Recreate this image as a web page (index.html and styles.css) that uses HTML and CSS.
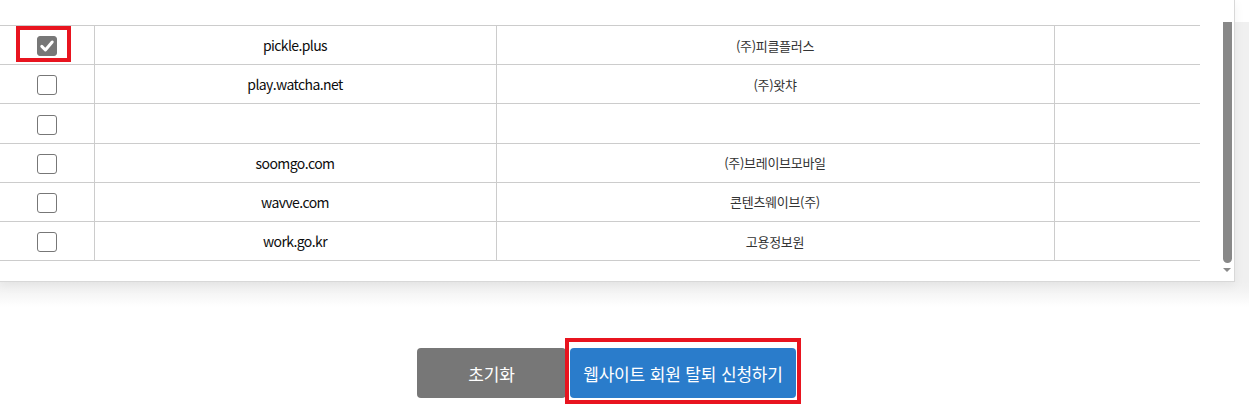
FILE: index.html
```html
<!DOCTYPE html>
<html lang="ko">
<head>
<meta charset="utf-8">
<title>웹사이트 회원 탈퇴</title>
<link rel="stylesheet" href="styles.css">
</head>
<body>
<div class="shade">
  <div class="panel">
    <div class="table-area">
      <table class="sites">
        <colgroup>
          <col class="c-check"><col class="c-domain"><col class="c-company"><col class="c-extra">
        </colgroup>
        <tbody>
          <tr>
            <td class="check-cell"><span class="checkbox checked"><svg viewBox="0 0 20 20" width="20" height="20"><path d="M4.8 10.4 L8.4 14 L15.2 6" fill="none" stroke="#fff" stroke-width="3" stroke-linecap="round" stroke-linejoin="round"/></svg></span><span class="mark mark-check"></span></td>
            <td>pickle.plus</td><td class="ko">(주)피클플러스</td><td></td>
          </tr>
          <tr>
            <td class="check-cell"><span class="checkbox"></span></td>
            <td>play.watcha.net</td><td class="ko">(주)왓챠</td><td></td>
          </tr>
          <tr>
            <td class="check-cell"><span class="checkbox"></span></td>
            <td></td><td class="ko"></td><td></td>
          </tr>
          <tr>
            <td class="check-cell"><span class="checkbox"></span></td>
            <td>soomgo.com</td><td class="ko">(주)브레이브모바일</td><td></td>
          </tr>
          <tr>
            <td class="check-cell"><span class="checkbox"></span></td>
            <td>wavve.com</td><td class="ko">콘텐츠웨이브(주)</td><td></td>
          </tr>
          <tr>
            <td class="check-cell"><span class="checkbox"></span></td>
            <td>work.go.kr</td><td class="ko">고용정보원</td><td></td>
          </tr>
        </tbody>
      </table>
    </div>
    <div class="scrollbar">
      <div class="thumb"></div>
      <div class="arrow"></div>
    </div>
  </div>
</div>
<div class="actions">
  <button class="btn btn-reset" type="button">초기화</button>
  <span class="submit-wrap">
    <button class="btn btn-submit" type="button">웹사이트 회원 탈퇴 신청하기</button>
    <span class="mark mark-submit"></span>
  </span>
</div>
</body>
</html>
```

FILE: styles.css
```css
html, body {
  margin: 0;
  padding: 0;
  background: #ffffff;
}
body {
  font-family: "Noto Sans CJK KR", "Noto Sans", sans-serif;
  color: #222;
  width: 1249px;
  height: 415px;
  overflow: hidden;
}
.shade {
  height: 307px;
  background: linear-gradient(#ffffff, #ffffff 22px, #f0f0f0 22px, #f0f0f0 282px, #f3f3f3 290px, #ffffff 307px);
}
.panel {
  width: 1234px;
  height: 281px;
  background: #ffffff;
  border-right: 1px solid #d8d8d8;
  border-bottom: 1px solid #d8d8d8;
  display: flex;
  box-shadow: 0 3px 10px rgba(0,0,0,0.06);
}
.table-area {
  width: 1200px;
  padding-top: 25px;
}
.sites {
  width: 1200px;
  border-collapse: collapse;
  table-layout: fixed;
  border-top: 1px solid #cccccc;
}
.c-check { width: 94px; }
.c-domain { width: 402px; }
.c-company { width: 558px; }
.c-extra { width: 146px; }
.sites td {
  height: 38.2px;
  padding: 0;
  border-bottom: 1px solid #cccccc;
  border-left: 1px solid #cccccc;
  text-align: center;
  font-size: 14px;
  font-weight: 400;
  letter-spacing: -0.6px;
  color: #0d0d0d;
}
.sites td:first-child { border-left: none; }
.sites td.ko { color: #333; letter-spacing: -0.3px; font-size: 13px; }
.check-cell { position: relative; }
.checkbox {
  display: inline-block;
  box-sizing: border-box;
  width: 20px;
  height: 20px;
  border: 1px solid #777;
  border-radius: 3px;
  background: #fff;
  vertical-align: middle;
}
.checkbox.checked {
  background: #777;
}
.checkbox svg { display: block; margin: -1px; }
.mark {
  position: absolute;
  border: 4px solid #e8141f;
  pointer-events: none;
}
.mark-check {
  left: 16px;
  top: 0px;
  width: 47px;
  height: 28px;
}
.scrollbar {
  width: 34px;
  display: flex;
  flex-direction: column;
  align-items: flex-end;
  padding-top: 22px;
  padding-right: 2px;
  box-sizing: border-box;
}
.thumb {
  width: 9px;
  height: 241px;
  background: #888;
  border-radius: 0 0 5px 5px;
}
.arrow {
  margin-top: 5px;
  margin-right: 1px;
  width: 0;
  height: 0;
  border-left: 4px solid transparent;
  border-right: 4px solid transparent;
  border-top: 4px solid #8a8a8a;
}
.actions {
  display: flex;
  padding-left: 417px;
  padding-top: 41px;
  gap: 4px;
}
.btn {
  height: 50px;
  border: none;
  border-radius: 4px;
  color: #fff;
  font-family: "Noto Sans CJK KR", "Noto Sans", sans-serif;
  font-size: 17px;
  letter-spacing: -0.15px;
  padding: 0;
}
.btn-reset {
  width: 149px;
  background: #777777;
}
.submit-wrap {
  position: relative;
  display: block;
}
.btn-submit {
  width: 226px;
  background: #2a7ccb;
  display: block;
}
.mark-submit {
  left: -5px;
  top: -10px;
  width: 228px;
  height: 58px;
}
```
